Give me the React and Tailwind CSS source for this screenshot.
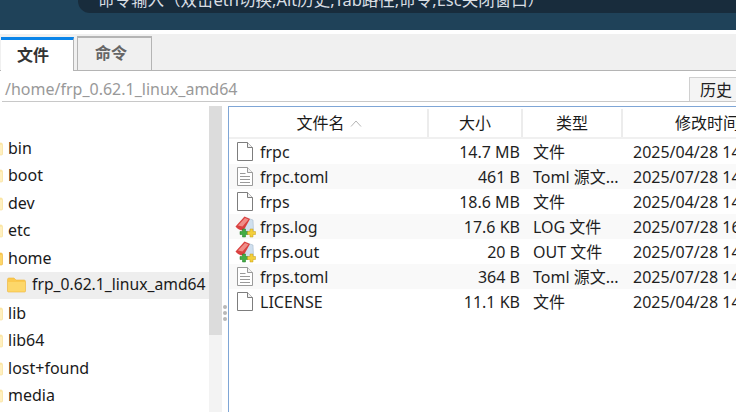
import React from "react";

const FONT = "font-['Noto_Sans','Noto_Sans_CJK_SC',sans-serif]";

const folders = ["bin", "boot", "dev", "etc", "home", "frp_0.62.1_linux_amd64", "lib", "lib64", "lost+found", "media"];

const files = [
  { name: "frpc", size: "14.7 MB", type: "文件", time: "2025/04/28 14:", icon: "plain" },
  { name: "frpc.toml", size: "461 B", type: "Toml 源文...", time: "2025/07/28 14:", icon: "text" },
  { name: "frps", size: "18.6 MB", type: "文件", time: "2025/04/28 14:", icon: "plain" },
  { name: "frps.log", size: "17.6 KB", type: "LOG 文件", time: "2025/07/28 16:", icon: "log" },
  { name: "frps.out", size: "20 B", type: "OUT 文件", time: "2025/07/28 14:", icon: "log" },
  { name: "frps.toml", size: "364 B", type: "Toml 源文...", time: "2025/07/28 14:", icon: "text" },
  { name: "LICENSE", size: "11.1 KB", type: "文件", time: "2025/04/28 14:", icon: "plain" },
];

const FolderIcon = ({ open }) => (
  <svg width="19" height="16" viewBox="0 0 19 16" className="shrink-0">
    <path d="M0.5 2.5 Q0.5 1 2 1 H7 L9 3 H17 Q18.5 3 18.5 4.5 V14 Q18.5 15 17.5 15 H1.5 Q0.5 15 0.5 14 Z" fill={open ? "#fbc94f" : "#fde9a8"} stroke={open ? "#eeb53a" : "#f6dd94"} strokeWidth="0.6" />
    <path d="M1 5 H18 V14.5 H1 Z" fill={open ? "#fdd76a" : "#fff0c0"} />
  </svg>
);

const FileIcon = ({ kind }) => {
  if (kind === "log") {
    return (
      <svg width="21" height="22" viewBox="0 0 21 22" className="-mr-[3px] -ml-0.5 shrink-0">
        <path d="M12 2 L18 4 L18.5 15 L9 16 Z" fill="#cfdfee" stroke="#a9bccd" strokeWidth="0.6" />
        <path d="M0.5 10.5 L9.5 0.5 L15 3 L8.5 14.5 Q3.5 14.5 0.5 10.5 Z" fill="#d9403f" />
        <path d="M3 9.5 L10 2 L13.5 3.5 L7.5 10.5 Z" fill="#ef8d88" />
        <path d="M7.5 13 H10.5 V15.5 H13 V18.5 H10.5 V21 H7.5 V18.5 H5 V15.5 H7.5 Z" fill="#43ad45" stroke="#1d7a25" strokeWidth="0.5" />
        <path d="M15 13 H18 V15.5 H20.5 V18.5 H18 V21 H15 V18.5 H12.5 V15.5 H15 Z" fill="#f3cf3c" stroke="#c79c16" strokeWidth="0.5" />
      </svg>
    );
  }
  const line = kind === "text" ? "#9a9a9a" : "#7d7d7d";
  return (
    <svg width="16" height="19" viewBox="0 0 16 19" className="shrink-0">
      <path d="M0.5 0.5 H10.5 L15.5 5.5 V18.5 H0.5 Z" fill="#fff" stroke={line} />
      <path d="M10.5 0.5 V5.5 H15.5" fill="#f2f2f2" stroke={line} />
      {kind === "text" && <path d="M3 6.5 H8.5 M3 9.5 H13 M3 12.5 H13 M3 15.5 H13" stroke="#9a9a9a" />}
    </svg>
  );
};

const App = () => {
  return (
    <div className={`flex h-[412px] w-[736px] flex-col overflow-hidden bg-white ${FONT}`}>
      {/* terminal strip above the panel */}
      <div className="h-[30px] shrink-0 overflow-hidden bg-[#1f4259]">
        <div className="ml-[78px] h-[13px] overflow-hidden rounded-bl-xl bg-[#182c3c] pl-5">
          <div className="-mt-[10px] whitespace-nowrap text-[16.5px] leading-5 text-[#d8dee3]">
            命令输入（双击eth切换,Alt历史,Tab路径,命令,Esc关闭窗口）
          </div>
        </div>
      </div>

      {/* tabs */}
      <div className="mt-1 flex h-[37px] shrink-0 items-end border-b border-[#b4b4b4] bg-[#f0f0f0]">
        <div className="relative top-px ml-px flex h-[34px] w-[73px] items-center border-t-[3px] border-r border-t-[#0a84e8] border-r-[#b4b4b4] bg-white pb-0.5 pl-4 text-base font-bold text-[#333]">
          文件
        </div>
        <div className="ml-[3px] flex h-[34px] w-[75px] items-center border-x border-t-2 border-[#b4b4b4] pb-0.5 pl-[17px] text-base font-bold text-[#666]">
          命令
        </div>
      </div>

      {/* path bar */}
      <div className="ml-0.5 flex h-[31px] shrink-0 items-end justify-between border-b border-[#c8c8c8] bg-white">
        <span className="ml-[3px] text-base leading-6 text-[#999]">/home/frp_0.62.1_linux_amd64</span>
        <button className="flex h-6 w-[47px] items-center border-t border-l border-[#d0d0d0] bg-[#f4f4f4] pl-[10px] text-base whitespace-nowrap text-[#222]">
          历史
        </button>
      </div>

      <div className="flex min-h-0 flex-1 pt-1">
        {/* folder tree */}
        <div className="w-[209px] shrink-0 overflow-hidden pt-[28px] text-base text-[#1a1a1a]">
          {folders.map((f, i) =>
            i === 5 ? (
              <div key={f} className="flex h-[27.5px] items-center gap-[6px] whitespace-nowrap bg-[#eeeeee] pl-[7px]">
                <FolderIcon open />
                <span className="text-[15.7px]">{f}</span>
              </div>
            ) : (
              <div key={f} className="flex h-[27.5px] items-center gap-[5px] whitespace-nowrap">
                <span className="-ml-4">
                  <FolderIcon open={i === 4} />
                </span>
                <span>{f}</span>
              </div>
            )
          )}
        </div>

        {/* tree scrollbar */}
        <div className="flex w-[13px] shrink-0 flex-col bg-[#f3f3f3]">
          <div className="h-[229px] bg-[#dcdcdc]"></div>
        </div>

        {/* splitter */}
        <div className="flex w-[6px] shrink-0 flex-col items-center gap-[2px] pt-[199px]">
          <span className="size-[4px] rounded-full bg-[#b8b8b8]"></span>
          <span className="size-[4px] rounded-full bg-[#b8b8b8]"></span>
          <span className="size-[4px] rounded-full bg-[#b8b8b8]"></span>
        </div>

        {/* file list */}
        <div className="min-w-0 flex-1 overflow-hidden border-t border-l border-[#7fa6d6] bg-white">
          <div className="flex h-[32px] w-[560px] border-b-2 border-[#f0f0f0] pt-0.5 text-base text-[#1a1a1a]">
            <div className="flex w-[200px] items-center justify-center gap-[5px] border-r-2 border-[#ececec] pl-0.5">
              文件名
              <svg width="12" height="7" viewBox="0 0 12 7" fill="none">
                <path d="M1 6.5 L6 1 L11 6.5" stroke="#b5b5b5" />
              </svg>
            </div>
            <div className="flex w-[94px] items-center justify-center border-r-2 border-[#ececec]">大小</div>
            <div className="flex w-[100px] items-center justify-center border-r-2 border-[#ececec]">类型</div>
            <div className="flex w-[166px] items-center justify-center whitespace-nowrap pl-0.5">修改时间</div>
          </div>
          <div className="text-base text-[#1f1f1f]">
            {files.map((f, i) => (
              <div key={f.name} className={`flex h-[25px] w-[560px] items-center whitespace-nowrap ${i % 2 === 1 ? "bg-[#f9f9f9]" : "bg-white"}`}>
                <div className="flex w-[200px] items-center gap-[7px] pl-2">
                  <FileIcon kind={f.icon} />
                  <span>{f.name}</span>
                </div>
                <div className="w-[91px] text-right">{f.size}</div>
                <div className="w-[102px] pl-[13px]">{f.type}</div>
                <div className="flex-1 pl-[11px]">{f.time}</div>
              </div>
            ))}
          </div>
        </div>
      </div>
    </div>
  );
};

export default App;
